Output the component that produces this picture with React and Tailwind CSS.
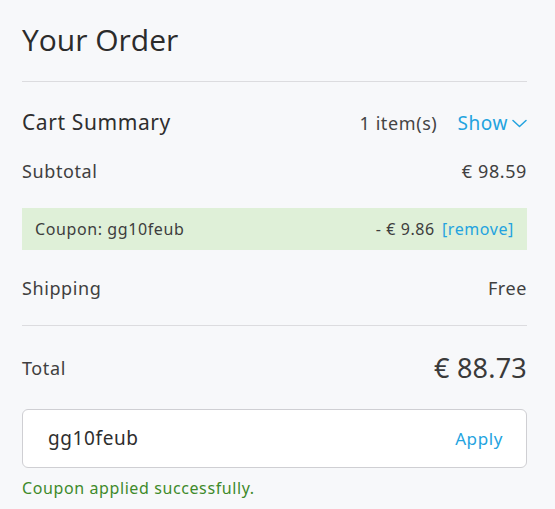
const body = { fontFamily: "'Noto Sans', Lato, sans-serif" };

const Chevron = () => (
  <svg width="15" height="9" viewBox="0 0 15 9" fill="none" stroke="currentColor" strokeWidth="1.5" strokeLinecap="round" strokeLinejoin="round">
    <path d="M1 1.5l6.5 6 6.5-6" />
  </svg>
);

const App = () => {
  return (
    <div className="w-[555px] h-[509px] bg-[#f7f8fa] pl-[22px] pr-[28px] text-[#404040] tracking-[0.6px] overflow-hidden" style={body}>
      {/* Title */}
      <div className="h-[82px] flex items-center border-b border-[#dcdcdf]">
        <h1 className="text-[30px] text-[#2b2b2b] pb-[2px] tracking-normal" style={{ fontFamily: "'Open Sans', sans-serif" }}>
          Your Order
        </h1>
      </div>

      {/* Cart summary */}
      <div className="mt-[21px] h-[40px] flex items-center justify-between">
        <span className="text-[21px] text-[#2e2e2e]">Cart Summary</span>
        <div className="flex items-center gap-[20px]">
          <span className="text-[18px] text-[#444]">1 item(s)</span>
          <button className="flex items-center gap-[4px] text-[19px] text-[#23a3df] tracking-[0.6px]">
            Show <Chevron />
          </button>
        </div>
      </div>

      <div className="mt-[13px] h-[30px] flex items-center justify-between text-[18px]">
        <span>Subtotal</span>
        <span>€ 98.59</span>
      </div>

      {/* Coupon */}
      <div className="mt-[22px] h-[42px] bg-[#dff0d8] px-[13px] flex items-center justify-between text-[16px] text-[#3d3d3d]">
        <span>Coupon: gg10feub</span>
        <div className="flex items-center gap-[7px]">
          <span>- € 9.86</span>
          <span className="text-[#23a3df]">[remove]</span>
        </div>
      </div>

      <div className="mt-[23px] h-[30px] flex items-center justify-between text-[18px]">
        <span>Shipping</span>
        <span>Free</span>
      </div>

      <div className="mt-[22px] border-t border-[#dcdcdf]" />

      {/* Total */}
      <div className="mt-[22px] h-[40px] flex items-center justify-between">
        <span className="text-[18px]">Total</span>
        <span className="text-[27px] text-[#3a3a3a] tracking-[0.2px]">€ 88.73</span>
      </div>

      {/* Coupon input */}
      <div className="mt-[21px] h-[59px] bg-white border border-[#cfcfd3] rounded-[6px] flex items-center justify-between pl-[25px] pr-[23px]">
        <span className="text-[19px] text-[#2e2e2e]">gg10feub</span>
        <button className="text-[17px] text-[#23a3df] tracking-[0.6px]">Apply</button>
      </div>

      <p className="mt-[8px] leading-[24px] text-[16px] text-[#3e8a2a]">Coupon applied successfully.</p>
    </div>
  );
};

export default App;
